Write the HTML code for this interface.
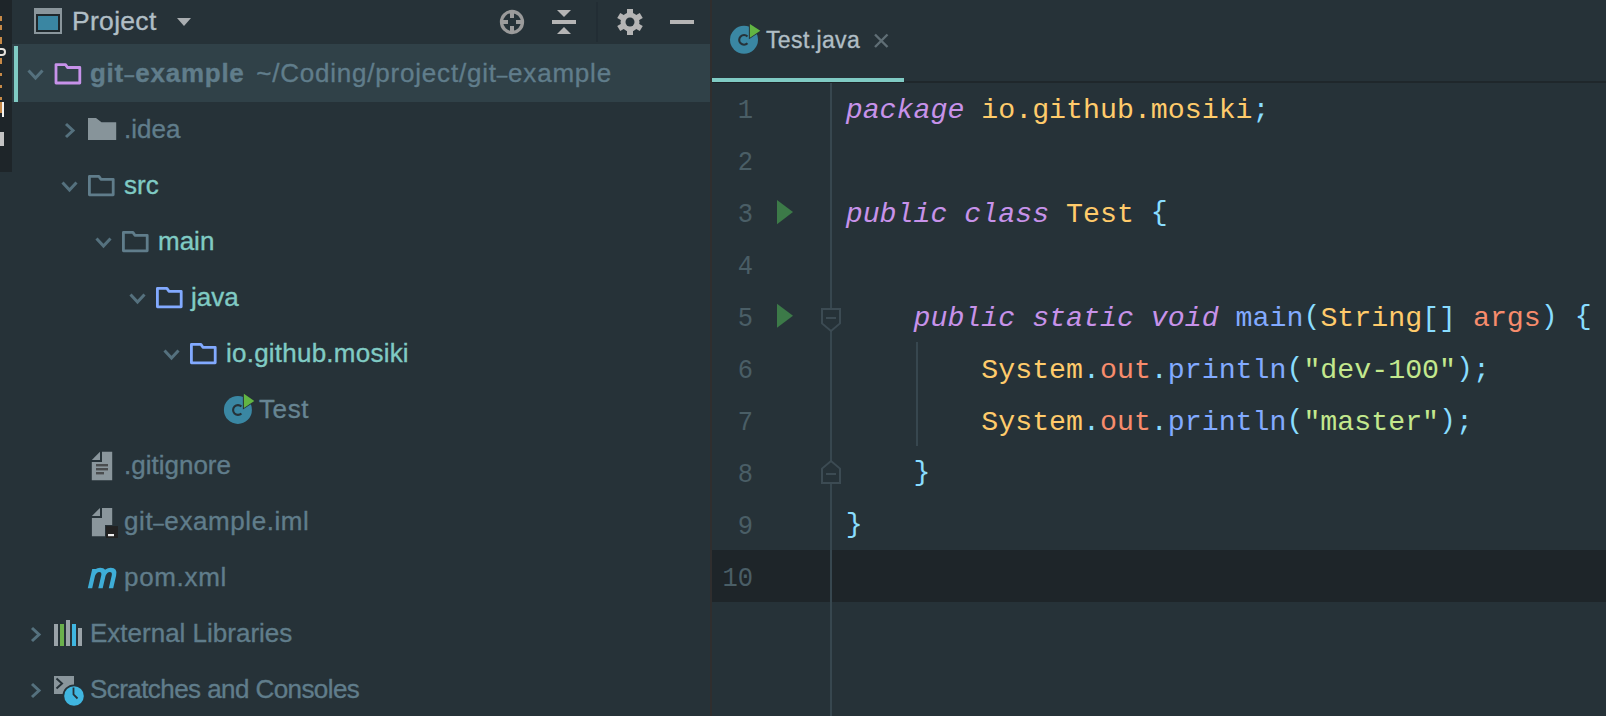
<!DOCTYPE html>
<html><head><meta charset="utf-8">
<style>
*{margin:0;padding:0;box-sizing:border-box}
html,body{width:1606px;height:716px;overflow:hidden;background:#263238}
body{position:relative;font-family:"Liberation Sans",sans-serif}
.a{position:absolute}
svg{position:absolute;overflow:visible}
.t{position:absolute;white-space:pre;font-size:26px;line-height:30px;color:#607D8B;-webkit-text-stroke:0.35px currentColor}
.code{position:absolute;white-space:pre;font-family:"Liberation Mono",monospace;font-size:28.25px;line-height:52px;color:#B0BEC5;left:845.7px}
.kw{color:#C792EA;font-style:italic}
.y{color:#FFCB6B}
.op{color:#89DDFF}
.fn{color:#82AAFF}
.or{color:#F78C6C}
.st{color:#C3E88D}
.p{position:relative;top:-2.5px}
.d{font-size:19px;line-height:1px;position:relative;top:-1.5px}
.ln{position:absolute;width:60px;left:693px;transform:scaleX(0.9);transform-origin:100% 50%;text-align:right;font-family:"Liberation Mono",monospace;font-size:28.25px;line-height:52px;color:#4a5e66}
</style></head><body>
<!-- left strip -->
<div class="a" style="left:0;top:0;width:12px;height:172px;background:#1e2529"></div>
<div class="a" style="left:0;top:16px;width:1.5px;height:5px;background:#c88a48"></div>
<div class="a" style="left:0;top:25px;width:1.5px;height:5px;background:#c88a48"></div>
<div class="a" style="left:0;top:37px;width:1.5px;height:7px;background:#c88a48"></div>
<div class="a" style="left:0;top:48px;width:5.5px;height:8px;border-radius:0 5px 5px 0;border:2px solid #e8e4de;border-left:none;background:transparent"></div>
<div class="a" style="left:0;top:58px;width:1.5px;height:6px;background:#c88a48"></div>
<div class="a" style="left:0;top:73px;width:1.5px;height:3px;background:#c88a48"></div>
<div class="a" style="left:0;top:85px;width:1.5px;height:3px;background:#c88a48"></div>
<div class="a" style="left:0;top:97px;width:1.5px;height:3px;background:#c88a48"></div>
<div class="a" style="left:0;top:102px;width:1.5px;height:11px;background:#c88a48"></div>
<div class="a" style="left:1.5px;top:102px;width:2.5px;height:14.5px;background:#f4f4f4"></div>
<div class="a" style="left:0;top:132px;width:4px;height:14px;background:#c4c4c4"></div>
<!-- project header -->
<div class="a" style="left:34px;top:8px;width:28px;height:26px;background:#8a969c"></div>
<div class="a" style="left:36px;top:14px;width:24px;height:18px;background:#1f282c"></div>
<div class="a" style="left:38px;top:16px;width:20px;height:14px;background:#3a86a2"></div>
<div class="t" style="left:72px;top:6px;color:#B0BEC5;font-size:26.5px;letter-spacing:0.3px">Project</div>
<svg style="left:176px;top:17px" width="16" height="10"><polygon points="1,1 15,1 8,9" fill="#a9aeb1"/></svg>

<!-- header icons -->
<svg style="left:498px;top:8px" width="28" height="28" viewBox="0 0 28 28">
 <circle cx="14" cy="14" r="10.5" fill="none" stroke="#9a9a9a" stroke-width="3.3"/>
 <rect x="12" y="3" width="4" height="7" fill="#9c9c9c"/><rect x="12" y="18" width="4" height="7" fill="#9c9c9c"/>
 <rect x="3" y="12" width="7" height="4" fill="#9c9c9c"/><rect x="18" y="12" width="7" height="4" fill="#9c9c9c"/>
</svg>
<svg style="left:550px;top:8px" width="28" height="28" viewBox="0 0 28 28">
 <polygon points="7,2 21,2 14,9" fill="#b5b5b5"/><rect x="2" y="12" width="24" height="4" fill="#b5b5b5"/><polygon points="14,19 21,26 7,26" fill="#b5b5b5"/>
</svg>
<div class="a" style="left:596px;top:2px;width:2px;height:40px;background:#222d34"></div>
<svg style="left:616px;top:8px" width="28" height="28" viewBox="0 0 28 28">
 <g fill="#b5b5b5"><circle cx="14" cy="14" r="9.5"/>
 <rect x="11" y="1" width="6" height="26"/><rect x="11" y="1" width="6" height="26" transform="rotate(60 14 14)"/><rect x="11" y="1" width="6" height="26" transform="rotate(120 14 14)"/></g>
 <circle cx="14" cy="14" r="4.5" fill="#263238"/>
</svg>
<div class="a" style="left:670px;top:20px;width:24px;height:4px;background:#b5b5b5"></div>

<!-- selected row -->
<div class="a" style="left:12px;top:44px;width:698px;height:58px;background:#304148"></div>
<div class="a" style="left:14px;top:46px;width:4px;height:56px;background:#80CBC4"></div>

<!-- chevrons -->
<svg style="left:0;top:0" width="710" height="716">
 <g fill="none" stroke="#55717e" stroke-width="3" stroke-linecap="butt" stroke-linejoin="miter">
  <polyline points="28.5,70.5 35.5,78 42.5,70.5"/>
  <polyline points="66,124 73,130.5 66,137"/>
  <polyline points="62.5,182.5 69.5,190 76.5,182.5"/>
  <polyline points="96.5,238.5 103.5,246 110.5,238.5"/>
  <polyline points="130.5,294.5 137.5,302 144.5,294.5"/>
  <polyline points="164.5,350.5 171.5,358 178.5,350.5"/>
  <polyline points="32,628 39,634.5 32,641"/>
  <polyline points="32,684 39,690.5 32,697"/>
 </g>
 <!-- folders outline -->
 <g fill="none" stroke-width="2.8" stroke-linejoin="round">
  <path d="M56,64.6 H65.5 L67.5,67.5 H79.8 V83 H56 Z" stroke="#C792EA"/>
  <path d="M89.4,176.4 H98.9 L100.9,179.3 H113.2 V194.8 H89.4 Z" stroke="#607D8B"/>
  <path d="M123.4,232.4 H132.9 L134.9,235.3 H147.2 V250.8 H123.4 Z" stroke="#607D8B"/>
  <path d="M157.4,288.4 H166.9 L168.9,291.3 H181.2 V306.8 H157.4 Z" stroke="#82AAFF"/>
  <path d="M191.4,344.4 H200.9 L202.9,347.3 H215.2 V362.8 H191.4 Z" stroke="#82AAFF"/>
 </g>
 <!-- filled folder .idea -->
 <path d="M88,118 H96 L101.5,122.3 H116.2 V140 H88 Z" fill="#87949a"/>
</svg>

<!-- tree text -->
<div class="t" style="left:90px;top:58px;font-weight:bold;letter-spacing:0.74px">git<span class="d">–</span>example</div>
<div class="t" style="left:256.2px;top:58px;letter-spacing:0.79px">~/Coding/project/git<span class="d">–</span>example</div>
<div class="t" style="left:124px;top:114px">.idea</div>
<div class="t" style="left:124px;top:170px;color:#80CBC4">src</div>
<div class="t" style="left:158px;top:226px;color:#80CBC4">main</div>
<div class="t" style="left:191px;top:282px;color:#80CBC4">java</div>
<div class="t" style="left:226px;top:338px;color:#80CBC4;letter-spacing:0.23px">io.github.mosiki</div>
<div class="t" style="left:259px;top:394px;color:#678593;letter-spacing:0.6px">Test</div>
<div class="t" style="left:124px;top:450px">.gitignore</div>
<div class="t" style="left:124px;top:506px;letter-spacing:0.58px">git<span class="d">–</span>example.iml</div>
<div class="t" style="left:124px;top:562px;letter-spacing:0.67px">pom.xml</div>
<div class="t" style="left:90px;top:618px">External Libraries</div>
<div class="t" style="left:90px;top:674px;letter-spacing:-0.57px">Scratches and Consoles</div>

<!-- class icon tree -->
<svg style="left:0;top:0" width="710" height="716">
 <circle cx="237.9" cy="409.9" r="14" fill="#3a87a3"/>
 <path d="M241.4,406.6 A4.85,4.85 0 1 0 241.4,413.4" fill="none" stroke="#263238" stroke-width="2.1"/>
 <polygon points="242.9,392.3 242.9,409.4 255.8,401" fill="#263238"/>
 <polygon points="243.9,393.8 243.9,407.9 254.3,401" fill="#62b543"/>
 <!-- gitignore doc -->
 <path d="M102,451.8 H112.2 V480.2 H91.8 V462 H102 Z" fill="#8a969c"/>
 <polygon points="91.8,460 100,451.8 100,460" fill="#8a969c"/>
 <rect x="96" y="464" width="12" height="2.4" fill="#4a4d4f"/>
 <rect x="96" y="468" width="12" height="2.4" fill="#4a4d4f"/>
 <rect x="96" y="472" width="8" height="2.4" fill="#4a4d4f"/>
 <!-- iml doc -->
 <path d="M102,507.9 H112.2 V536.2 H91.9 V518 H102 Z" fill="#8a969c"/>
 <polygon points="91.9,516 100,507.9 100,516" fill="#8a969c"/>
 <rect x="105" y="525" width="14" height="14" fill="#263238"/>
 <rect x="106" y="526.1" width="12" height="11.9" fill="#222222"/>
 <rect x="108" y="534" width="6" height="2.2" fill="#eeeeee"/>
 <!-- maven m -->
 <g transform="translate(80,560) skewX(-13)">
  <path d="M16.5,28.2 V9 M16.5,15.5 C17.5,11 19.8,9.9 22,9.9 C25,9.9 27,11.5 27,15.5 V28.2 M27,15.5 C28,11 30.3,9.9 32.5,9.9 C35.5,9.9 37.5,11.5 37.5,15.5 V28.2" fill="none" stroke="#3eaed8" stroke-width="4.4"/>
 </g>
 <!-- external libraries bars -->
 <rect x="54" y="624" width="4" height="22" fill="#9aa3a8"/>
 <rect x="60" y="624" width="4" height="22" fill="#6ab04c"/>
 <rect x="66" y="620" width="4" height="26" fill="#9aa3a8"/>
 <rect x="72" y="624" width="4" height="22" fill="#40b6e0"/>
 <rect x="78" y="628" width="4" height="18" fill="#9aa3a8"/>
 <!-- scratches -->
 <rect x="54" y="676" width="20" height="18" fill="#8a969c"/>
 <polyline points="56.5,678.6 62,683.5 56.5,688.4" fill="none" stroke="#263238" stroke-width="2"/>
 <circle cx="74" cy="696" r="11.5" fill="#263238"/>
 <circle cx="74" cy="696" r="9.8" fill="#40b6e0"/>
 <polyline points="73.5,687.5 73.5,694.5 77.5,698.5" fill="none" stroke="#263238" stroke-width="1.8"/>
</svg>

<!-- separator -->
<div class="a" style="left:710px;top:0;width:2px;height:716px;background:#302e2e"></div>

<!-- editor tab -->
<div class="a" style="left:712px;top:78px;width:192px;height:4px;background:#80CBC4"></div>
<div class="a" style="left:712px;top:82px;width:894px;height:1px;background:#1c2327"></div>
<div class="a" style="left:904px;top:81px;width:702px;height:2px;background:#1f272b"></div>
<svg style="left:0;top:0" width="1606" height="716">
 <circle cx="744" cy="39.8" r="14" fill="#3a87a3"/>
 <path d="M747.5,36.5 A4.85,4.85 0 1 0 747.5,43.3" fill="none" stroke="#263238" stroke-width="2.1"/>
 <polygon points="748.9,22.4 748.9,39.2 761.8,30.8" fill="#263238"/>
 <polygon points="749.9,23.9 749.9,37.7 760.3,30.8" fill="#62b543"/>
 <path d="M875,34.5 L887.5,47 M887.5,34.5 L875,47" stroke="#5f6e75" stroke-width="2.4"/>
</svg>
<div class="t" style="left:766px;top:25px;color:#B0BEC5;font-size:23px;letter-spacing:0.37px">Test.java</div>

<!-- current line -->
<div class="a" style="left:712px;top:550px;width:894px;height:52px;background:#1e2529"></div>
<!-- gutter line -->
<div class="a" style="left:830px;top:83px;width:2px;height:633px;background:#37474F"></div>
<div class="a" style="left:916px;top:342px;width:2px;height:104px;background:#37474F"></div>

<!-- run icons & folds -->
<svg style="left:0;top:0" width="1606" height="716">
 <polygon points="777,199.9 777,224.2 793,212" fill="#3c7a48"/>
 <polygon points="777,303.8 777,327.8 793,315.8" fill="#3c7a48"/>
 <path d="M822,309 H840 V323.4 L831,331 L822,323.4 Z" fill="#263238" stroke="#3c4b53" stroke-width="2"/>
 <rect x="826" y="317" width="10" height="2" fill="#3c4b53"/>
 <path d="M822,483 H840 V468.6 L831,461 L822,468.6 Z" fill="#263238" stroke="#3c4b53" stroke-width="2"/>
 <rect x="826" y="473" width="10" height="2" fill="#3c4b53"/>
</svg>

<div class="ln" style="top:84px">1</div>
<div class="ln" style="top:136px">2</div>
<div class="ln" style="top:188px">3</div>
<div class="ln" style="top:240px">4</div>
<div class="ln" style="top:292px">5</div>
<div class="ln" style="top:344px">6</div>
<div class="ln" style="top:396px">7</div>
<div class="ln" style="top:448px">8</div>
<div class="ln" style="top:500px">9</div>
<div class="ln" style="top:552px">10</div>

<div class="code" style="top:84px"><span class="kw">package</span> <span class="y">io.github.mosiki</span><span class="op">;</span></div>
<div class="code" style="top:188px"><span class="kw">public</span> <span class="kw">class</span> <span class="y">Test</span> <span class="op"><span class="p">{</span></span></div>
<div class="code" style="top:292px">    <span class="kw">public</span> <span class="kw">static</span> <span class="kw">void</span> <span class="fn">main</span><span class="op"><span class="p">(</span></span><span class="y">String</span><span class="op">[]</span> <span class="or">args</span><span class="op"><span class="p">)</span></span> <span class="op"><span class="p">{</span></span></div>
<div class="code" style="top:344px">        <span class="y">System</span><span class="op">.</span><span class="or">out</span><span class="op">.</span><span class="fn">println</span><span class="op"><span class="p">(</span></span><span class="st">"dev-100"</span><span class="op"><span class="p">)</span>;</span></div>
<div class="code" style="top:396px">        <span class="y">System</span><span class="op">.</span><span class="or">out</span><span class="op">.</span><span class="fn">println</span><span class="op"><span class="p">(</span></span><span class="st">"master"</span><span class="op"><span class="p">)</span>;</span></div>
<div class="code" style="top:448px">    <span class="op"><span class="p">}</span></span></div>
<div class="code" style="top:500px"><span class="op"><span class="p">}</span></span></div>

</body></html>
